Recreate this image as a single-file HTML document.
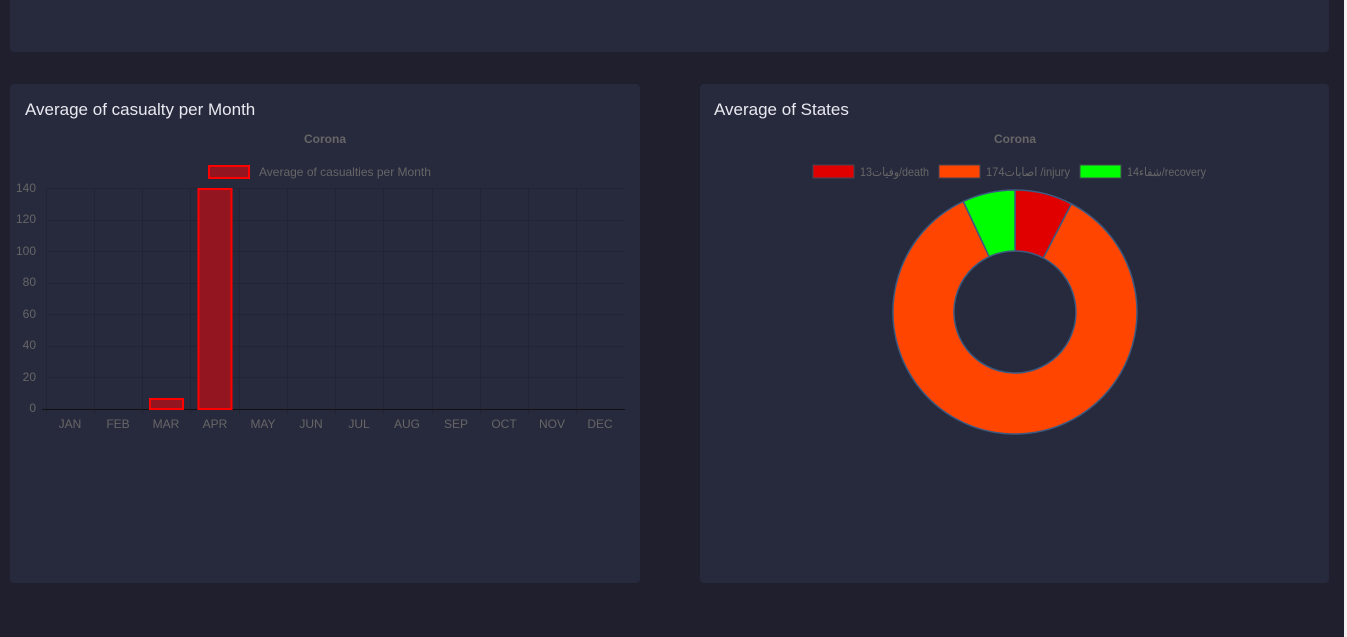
<!DOCTYPE html>
<html><head><style>
body{margin:0;width:1347px;height:637px;background:#1f1f2e;font-family:"Liberation Sans","Noto Sans CJK SC",sans-serif;position:relative;overflow:hidden}
.card{position:absolute;background:#272a3d;border-radius:4px}
.sb{position:absolute;left:1344px;top:0;width:3px;height:637px;background:#f1f1f1}
h2{position:absolute;margin:0;font-weight:normal;color:#e8e8f0;font-size:17px}
</style></head><body>
<div class="card" style="left:10px;top:-10px;width:1319px;height:62px"></div>
<div class="card" style="left:10px;top:84px;width:630px;height:499px"></div>
<div class="card" style="left:700px;top:84px;width:629px;height:499px"></div>
<div class="sb"></div>
<h2 style="left:25px;top:100px">Average of casualty per Month</h2>
<h2 style="left:714px;top:100px">Average of States</h2>
<svg width="1347" height="637" style="position:absolute;left:0;top:0" font-family="Liberation Sans, sans-serif">
<text x="325" y="143" fill="#666" font-size="12" font-weight="bold" text-anchor="middle">Corona</text>
<rect x="209" y="166" width="40" height="12" fill="#921520" stroke="#f00" stroke-width="2"/>
<text x="259" y="176" fill="#666" font-size="12">Average of casualties per Month</text>
<g stroke="#222333" stroke-width="1">
<line x1="46" y1="188.5" x2="625" y2="188.5"/><line x1="46" y1="220.5" x2="625" y2="220.5"/><line x1="46" y1="251.5" x2="625" y2="251.5"/><line x1="46" y1="283.5" x2="625" y2="283.5"/><line x1="46" y1="314.5" x2="625" y2="314.5"/><line x1="46" y1="346.5" x2="625" y2="346.5"/><line x1="46" y1="377.5" x2="625" y2="377.5"/>
<line x1="46.5" y1="188" x2="46.5" y2="414"/><line x1="94.5" y1="188" x2="94.5" y2="414"/><line x1="142.5" y1="188" x2="142.5" y2="414"/><line x1="190.5" y1="188" x2="190.5" y2="414"/><line x1="239.5" y1="188" x2="239.5" y2="414"/><line x1="287.5" y1="188" x2="287.5" y2="414"/><line x1="335.5" y1="188" x2="335.5" y2="414"/><line x1="383.5" y1="188" x2="383.5" y2="414"/><line x1="432.5" y1="188" x2="432.5" y2="414"/><line x1="480.5" y1="188" x2="480.5" y2="414"/><line x1="528.5" y1="188" x2="528.5" y2="414"/><line x1="576.5" y1="188" x2="576.5" y2="414"/>
</g>
<line x1="42" y1="409.5" x2="625" y2="409.5" stroke="#111" stroke-width="1"/>
<rect x="150" y="399" width="33" height="10" fill="#921520" stroke="#f00" stroke-width="2"/>
<rect x="198.5" y="189" width="33" height="220" fill="#921520" stroke="#f00" stroke-width="2"/>
<g fill="#666" font-size="12" text-anchor="end">
<text x="36" y="192">140</text><text x="36" y="223">120</text><text x="36" y="255">100</text><text x="36" y="286">80</text><text x="36" y="318">60</text><text x="36" y="349">40</text><text x="36" y="381">20</text><text x="36" y="412">0</text>
</g>
<g fill="#666" font-size="12" text-anchor="middle">
<text x="70" y="428">JAN</text><text x="118" y="428">FEB</text><text x="166" y="428">MAR</text><text x="215" y="428">APR</text><text x="263" y="428">MAY</text><text x="311" y="428">JUN</text><text x="359" y="428">JUL</text><text x="407" y="428">AUG</text><text x="456" y="428">SEP</text><text x="504" y="428">OCT</text><text x="552" y="428">NOV</text><text x="600" y="428">DEC</text>
</g>
<text x="1015" y="143" fill="#666" font-size="12" font-weight="bold" text-anchor="middle">Corona</text>
<rect x="813" y="165" width="41" height="13" fill="#e00000" stroke="#445" stroke-width="1"/>
<text x="860" y="176" fill="#666" font-size="12" textLength="69" lengthAdjust="spacingAndGlyphs">13وفيات/death</text>
<rect x="939" y="165" width="41" height="13" fill="#ff4500" stroke="#445" stroke-width="1"/>
<text x="986" y="176" fill="#666" font-size="12" textLength="84" lengthAdjust="spacingAndGlyphs">174اصابات /injury</text>
<rect x="1080" y="165" width="41" height="13" fill="#00ff00" stroke="#445" stroke-width="1"/>
<text x="1127" y="176" fill="#666" font-size="12" textLength="79" lengthAdjust="spacingAndGlyphs">14شفاء/recovery</text>
<g stroke="#3d5a80" stroke-width="1.5">
<path d="M1015 190 A122 122 0 0 1 1071.5 203.9 L1043.3 258 A61 61 0 0 0 1015 251 Z" fill="#e00000"/>
<path d="M1071.5 203.9 A122 122 0 1 1 963.3 201.5 L989.2 256.7 A61 61 0 1 0 1043.3 258 Z" fill="#ff4500"/>
<path d="M963.3 201.5 A122 122 0 0 1 1015 190 L1015 251 A61 61 0 0 0 989.2 256.7 Z" fill="#00ff00"/>
</g>
</svg>
</body></html>
